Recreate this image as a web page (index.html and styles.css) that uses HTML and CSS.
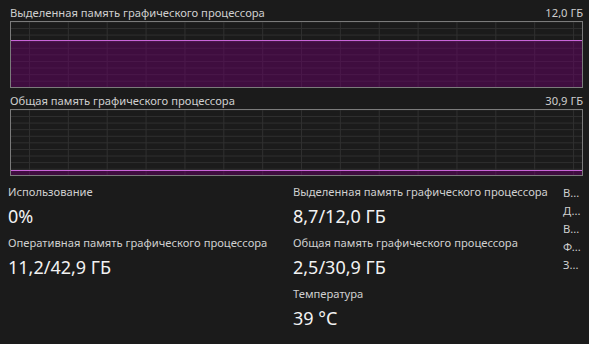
FILE: index.html
```html
<!DOCTYPE html>
<html lang="ru">
<head>
    <meta charset="UTF-8">
    <title>GPU</title>
    <link rel="stylesheet" href="styles.css">
</head>
<body>
    <div class="panel">
        <div class="chart">
            <div class="chart-head">
                <span>Выделенная память графического процессора</span>
                <span>12,0 ГБ</span>
            </div>
            <div class="graph">
                <div class="fill" style="height: 72.5%"></div>
            </div>
        </div>
        <div class="chart">
            <div class="chart-head">
                <span>Общая память графического процессора</span>
                <span>30,9 ГБ</span>
            </div>
            <div class="graph">
                <div class="fill" style="height: 8.1%"></div>
            </div>
        </div>

        <div class="stats">
            <div class="col col-a">
                <div class="stat">
                    <div class="label">Использование</div>
                    <div class="value">0%</div>
                </div>
                <div class="stat">
                    <div class="label">Оперативная память графического процессора</div>
                    <div class="value">11,2/42,9 ГБ</div>
                </div>
            </div>
            <div class="col col-b">
                <div class="stat">
                    <div class="label">Выделенная память графического процессора</div>
                    <div class="value">8,7/12,0 ГБ</div>
                </div>
                <div class="stat">
                    <div class="label">Общая память графического процессора</div>
                    <div class="value">2,5/30,9 ГБ</div>
                </div>
                <div class="stat">
                    <div class="label">Температура</div>
                    <div class="value">39 °C</div>
                </div>
            </div>
            <ul class="col col-c">
                <li>В...</li>
                <li>Д...</li>
                <li>В...</li>
                <li>Ф...</li>
                <li>З...</li>
            </ul>
        </div>
    </div>
</body>
</html>
```

FILE: styles.css
```css
body {
    margin: 0;
    background: #1b1b1b;
    font-family: 'Noto Sans', 'Open Sans', sans-serif;
    color: #d4d4d4;
    overflow: hidden;
}

.panel {
    padding: 4px 6px 0 10px;
}

.chart {
    margin-bottom: 4px;
}

.chart-head {
    display: flex;
    justify-content: space-between;
    font-size: 11.2px;
    line-height: 17px;
    height: 17px;
    color: #cfcfcf;
}

.graph {
    height: 65px;
    border: 1px solid #7b7b7b;
    display: flex;
    flex-direction: column;
    justify-content: flex-end;
    background-color: #1b1b1b;
    background-image:
        linear-gradient(to right, #2f2f2f 1px, transparent 1px),
        linear-gradient(to bottom, #2f2f2f 1px, transparent 1px);
    background-size: 38.86px 100%, 100% 6.6px;
    background-position: 18px 0, 0 6px;
}

.fill {
    box-sizing: border-box;
    border-top: 1px solid #c964d9;
    background: rgba(100, 0, 100, 0.5);
}

.stats {
    display: grid;
    grid-template-columns: 285px 270px 1fr;
    margin: 8px 0 0 -2px;
}

.stat {
    margin-bottom: 7px;
}

.label {
    font-size: 11.2px;
    line-height: 16px;
    margin-bottom: 4px;
    color: #d0d0d0;
    white-space: nowrap;
}

.value {
    font-size: 18px;
    line-height: 24px;
    color: #f2f2f2;
}

.col-c {
    list-style: none;
    margin: 0;
    padding: 0;
    font-size: 11.2px;
    line-height: 18px;
    color: #d0d0d0;
}
```
